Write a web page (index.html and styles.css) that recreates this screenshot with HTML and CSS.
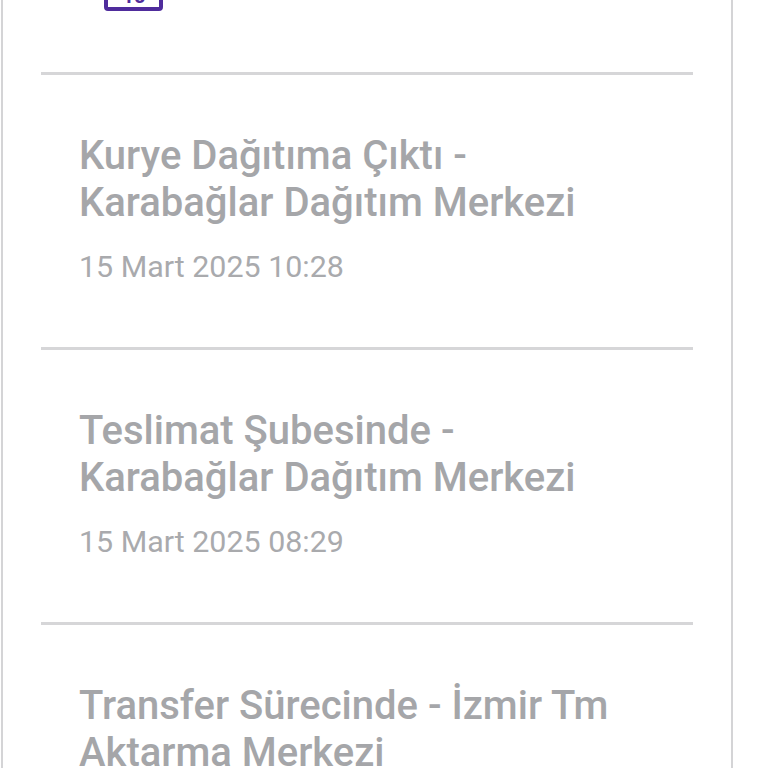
FILE: index.html
```html
<!DOCTYPE html>
<html lang="tr">
<head>
    <meta charset="UTF-8">
    <meta name="viewport" content="width=device-width, initial-scale=1.0">
    <title>Kargo Takip</title>
    <link rel="stylesheet" href="styles.css">
</head>
<body>
    <div class="card">
        <div class="top-row">
            <svg class="calendar" width="60" height="12" viewBox="0 0 60 12">
                <path d="M2 -6V7a2 2 0 0 0 2 2H55a2 2 0 0 0 2-2V-6" fill="none" stroke="#4f2c9c" stroke-width="4"/>
                <text class="calendar-day" x="30" y="3" text-anchor="middle">15</text>
            </svg>
        </div>
        <div class="step">
            <div class="step-title">Kurye Dağıtıma Çıktı -<br>Karabağlar Dağıtım Merkezi</div>
            <div class="step-date">15 Mart 2025 10:28</div>
        </div>
        <div class="step">
            <div class="step-title">Teslimat Şubesinde -<br>Karabağlar Dağıtım Merkezi</div>
            <div class="step-date">15 Mart 2025 08:29</div>
        </div>
        <div class="step">
            <div class="step-title">Transfer Sürecinde - İzmir Tm<br>Aktarma Merkezi</div>
        </div>
    </div>
</body>
</html>
```

FILE: styles.css
```css
body {
    background-color: #fff;
    font-family: Roboto, "Noto Sans", sans-serif;
    margin: 0;
    height: 768px;
    overflow: hidden;
}
.card {
    width: 732px;
    height: 768px;
    margin-left: 1px;
    padding: 0 38px;
    border-left: 2px solid #d4d4d6;
    border-right: 2px solid #d4d4d6;
    box-sizing: border-box;
    overflow: hidden;
}
.top-row {
    height: 72px;
    padding-left: 63px;
}
.calendar {
    display: block;
}
.calendar-day {
    fill: #4f2c9c;
    font-size: 20px;
    font-weight: 700;
}
.step {
    border-top: 3px solid #d6d6d8;
    padding: 57px 0 0 38px;
    height: 275px;
    box-sizing: border-box;
}
.step-title {
    color: #a5a6a9;
    font-size: 40px;
    font-weight: 500;
    line-height: 47px;
    white-space: nowrap;
}
.step-date {
    color: #a9aaad;
    font-size: 30.4px;
    line-height: 36px;
    margin-top: 23px;
}
```
